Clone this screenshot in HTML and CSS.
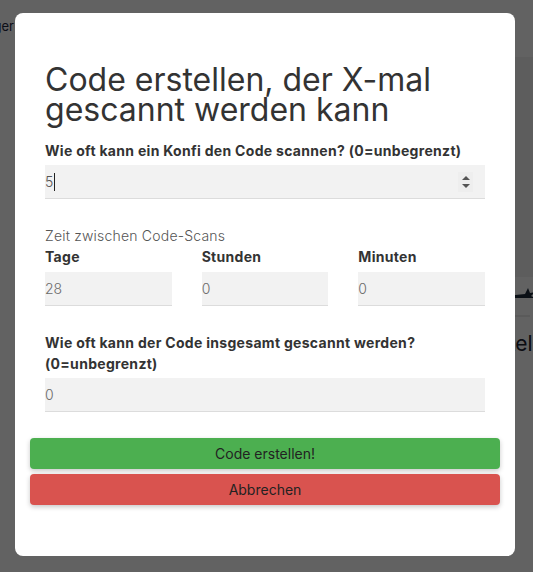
FILE: index.html
```html
<!DOCTYPE html>
<html lang="de">
<head>
<meta charset="utf-8">
<title>Code erstellen</title>
<link rel="stylesheet" href="styles.css">
</head>
<body>
<div class="page">
  <div class="page-left"><span class="nav-text">Träger</span></div>
  <div class="page-spacer"></div>
  <div class="page-right">
    <div class="bg-card"></div>
    <div class="bg-icon">
      <svg width="40" height="16" viewBox="0 0 40 16"><path d="M2 12 L30 9 L33 3 L35 8 L40 7 L36 11 L40 13 L20 13 Z" fill="#1d2a3a"/></svg>
    </div>
    <div class="bg-line"></div>
    <div class="bg-text">Stell</div>
  </div>
</div>
<div class="overlay"></div>
<div class="modal">
  <div class="modal-body">
    <h1 class="title">Code erstellen, der X-mal gescannt werden kann</h1>
    <label class="label">Wie oft kann ein Konfi den Code scannen? (0=unbegrenzt)</label>
    <div class="field">
      <span class="value value-active">5</span><span class="caret"></span>
      <span class="spinner">
        <svg width="12" height="18" viewBox="0 0 12 18"><path d="M2 7 L6 3 L10 7 Z M2 11 L10 11 L6 15 Z" fill="#555"/></svg>
      </span>
    </div>
    <div class="section-title">Zeit zwischen Code-Scans</div>
    <div class="grid3">
      <div class="col">
        <label class="label">Tage</label>
        <div class="field"><span class="value">28</span></div>
      </div>
      <div class="col">
        <label class="label">Stunden</label>
        <div class="field"><span class="value">0</span></div>
      </div>
      <div class="col">
        <label class="label">Minuten</label>
        <div class="field"><span class="value">0</span></div>
      </div>
    </div>
    <label class="label label-total">Wie oft kann der Code insgesamt gescannt werden? (0=unbegrenzt)</label>
    <div class="field"><span class="value">0</span></div>
  </div>
  <div class="actions">
    <button class="btn btn-green">Code erstellen!</button>
    <button class="btn btn-red">Abbrechen</button>
  </div>
</div>
</body>
</html>
```

FILE: styles.css
```css
html, body {
  margin: 0;
  padding: 0;
  height: 100%;
  overflow: hidden;
}

body {
  background: #ffffff;
  font-family: "Inter", "Open Sans", "Liberation Sans", sans-serif;
  color: #333;
}

.page {
  display: flex;
  height: 100%;
}

.page-left {
  width: 15px;
  overflow: hidden;
  display: flex;
  justify-content: flex-end;
  padding-top: 18px;
  flex-shrink: 0;
}

.nav-text {
  white-space: nowrap;
  font-size: 13px;
  color: #1d2540;
  height: 18px;
  padding-right: 1px;
}

.page-spacer {
  width: 465px;
  flex-shrink: 0;
}

.page-right {
  flex: 1;
  padding-top: 57px;
  display: flex;
  flex-direction: column;
  overflow: hidden;
}

.bg-card {
  height: 220px;
  background: #f1f1f1;
}

.bg-icon {
  height: 16px;
  margin-top: 8px;
  padding-left: 15px;
}

.bg-line {
  height: 2px;
  background: #eaeaea;
  margin-top: 14px;
  margin-left: 30px;
  width: 20px;
}

.bg-text {
  font-size: 21px;
  color: #1d2330;
  margin-top: 14px;
  padding-left: 15px;
  white-space: nowrap;
}

.overlay {
  position: fixed;
  inset: 0;
  background: rgba(0, 0, 0, 0.615);
}

.modal {
  position: fixed;
  top: 13px;
  left: 15px;
  width: 500px;
  height: 543px;
  background: #fff;
  border-radius: 8px;
  padding: 0 15px;
  box-sizing: border-box;
  display: flex;
  flex-direction: column;
}

.modal-body {
  padding: 52px 15px 0;
  display: flex;
  flex-direction: column;
}

.title {
  margin: 0 0 14.5px;
  font-size: 32px;
  line-height: 30px;
  font-weight: 400;
  color: #333;
  letter-spacing: 0;
}

.label {
  display: block;
  font-size: 14px;
  font-weight: 700;
  line-height: 21px;
  letter-spacing: 0.3px;
  color: #333;
  margin-bottom: 4.5px;
}

.field {
  height: 34px;
  background: #f2f2f2;
  border-bottom: 1px solid #dcdcdc;
  box-sizing: border-box;
  display: flex;
  align-items: center;
  font-size: 14px;
  font-weight: 300;
  color: #6a6a6a;
}

.value-active {
  color: #555;
}

.caret {
  width: 1px;
  height: 18px;
  background: #222;
  margin-left: 1px;
}

.spinner {
  margin-left: auto;
  margin-right: 12px;
  width: 15px;
  height: 20px;
  background: #eeeeee;
  display: flex;
  align-items: center;
  justify-content: center;
}

.section-title {
  margin-top: 27px;
  font-size: 14px;
  font-weight: 300;
  letter-spacing: 0.2px;
  color: #555;
  line-height: 20px;
}

.grid3 {
  display: grid;
  grid-template-columns: 1fr 1fr 1fr;
  column-gap: 30px;
}

.label-total {
  margin-top: 26px;
}

.actions {
  margin-top: 26px;
  display: flex;
  flex-direction: column;
  gap: 5px;
}

.btn {
  height: 31px;
  border: none;
  border-radius: 4px;
  font-family: inherit;
  font-size: 14px;
  color: #222;
  box-shadow: 0 2px 5px rgba(0, 0, 0, 0.22);
  padding: 0;
}

.btn-green {
  background: #4caf50;
}

.btn-red {
  background: #d9534f;
}
```
